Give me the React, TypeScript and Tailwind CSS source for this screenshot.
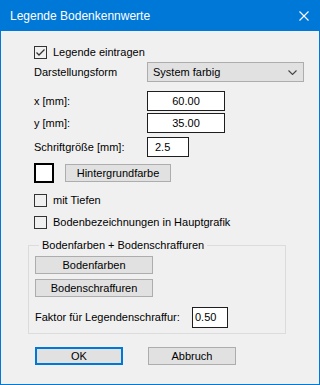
import React from 'react';

const font = { fontFamily: '"Liberation Sans", Arial, sans-serif' };

const CheckBox: React.FC<{ checked?: boolean; label: string }> = ({ checked, label }) => {
  return (
    <div className="flex h-[13px] items-center gap-[6px]">
      <div className="flex h-[13px] w-[13px] items-center justify-center border border-[#333333] bg-[#f0f0f0]">
        {checked && (
          <svg width="11" height="11" viewBox="0 0 11 11">
            <polyline points="1.5,5.5 4,8 9.5,2.5" fill="none" stroke="#333333" strokeWidth="1.3" />
          </svg>
        )}
      </div>
      <span className="text-[11px] leading-[13px] text-black">{label}</span>
    </div>
  );
};

const WinButton: React.FC<{ className?: string; border?: string; children: React.ReactNode }> = ({
  className = '',
  border = 'border border-[#adadad]',
  children,
}) => {
  return (
    <div className={'flex items-center justify-center bg-[#e1e1e1] text-[11px] leading-none text-black ' + border + ' ' + className}>
      {children}
    </div>
  );
};

const Field: React.FC<{ label: string; value: string; className?: string }> = ({ label, value, className = '' }) => {
  return (
    <div className="flex h-[20px] items-center">
      <span className="w-[113px] text-[11px] leading-none text-black">{label}</span>
      <div className={'flex h-[20px] items-center border border-[#1e1e1e] bg-white text-[11px] leading-none text-black ' + className}>
        {value}
      </div>
    </div>
  );
};

const LegendeBodenkennwerte: React.FC = () => {
  return (
    <div className="flex h-[385px] w-[320px] flex-col border border-t-0 border-[#0078d7] bg-[#f0f0f0]" style={font}>
      {/* Titelleiste */}
      <div className="-mx-px flex h-[31px] items-center justify-between bg-[#0078d7] pl-[10px] pr-[11px]">
        <span className="text-[12px] leading-none text-white">Legende Bodenkennwerte</span>
        <svg width="10" height="10" viewBox="0 0 10 10">
          <path d="M0.5 0.5 L9.5 9.5 M9.5 0.5 L0.5 9.5" stroke="#ffffff" strokeWidth="1.1" />
        </svg>
      </div>

      <div className="flex flex-col pl-[33px]">
        <div className="mt-[15px]">
          <CheckBox checked label="Legende eintragen" />
        </div>

        <div className="mt-[3px] flex h-[20px] items-center">
          <span className="w-[113px] text-[11px] leading-none text-black">Darstellungsform</span>
          <div className="flex h-[20px] w-[157px] items-center justify-between border border-[#adadad] bg-[#e1e1e1] pl-[5px] pr-[6px] text-[11px] leading-none text-black">
            <span>System farbig</span>
            <svg width="9" height="5" viewBox="0 0 9 5">
              <polyline points="0.5,0.5 4.5,4.5 8.5,0.5" fill="none" stroke="#444444" strokeWidth="1.1" />
            </svg>
          </div>
        </div>

        <div className="mt-[9px]">
          <Field label="x [mm]:" value="60.00" className="w-[78px] justify-center" />
        </div>
        <div className="mt-[2px]">
          <Field label="y [mm]:" value="35.00" className="w-[78px] justify-center" />
        </div>
        <div className="mt-[4px]">
          <Field label="Schriftgröße [mm]:" value="2.5" className="w-[42px] pl-[7px]" />
        </div>

        <div className="mt-[6px] flex h-[20px] items-center gap-[11px]">
          <div className="h-[20px] w-[20px] border-2 border-black bg-white" />
          <WinButton className="h-[18px] w-[106px]">Hintergrundfarbe</WinButton>
        </div>

        <div className="mt-[11px]">
          <CheckBox label="mit Tiefen" />
        </div>
        <div className="mt-[9px]">
          <CheckBox label="Bodenbezeichnungen in Hauptgrafik" />
        </div>

        {/* Gruppe */}
        <div className="relative ml-[-6px] mt-[16px] flex h-[89px] w-[258px] flex-col border border-[#dcdcdc] pl-[6px]">
          <span className="absolute left-[10px] top-[-7px] bg-[#f0f0f0] px-[3px] text-[11px] leading-[13px] text-black">
            Bodenfarben + Bodenschraffuren
          </span>
          <WinButton className="mt-[10px] h-[18px] w-[118px]">Bodenfarben</WinButton>
          <WinButton className="mt-[5px] h-[18px] w-[118px]">Bodenschraffuren</WinButton>
          <div className="mt-[10px] flex h-[21px] items-center">
            <span className="w-[157px] text-[11px] leading-none text-black">Faktor für Legendenschraffur:</span>
            <div className="flex h-[21px] w-[36px] items-center border border-[#1e1e1e] bg-white pl-[2px] text-[11px] leading-none text-black">
              0.50
            </div>
          </div>
        </div>

        <div className="mt-[13px] flex gap-[25px] pl-px">
          <WinButton className="h-[18px] w-[88px]" border="border-2 border-[#0078d7]">
            OK
          </WinButton>
          <WinButton className="h-[18px] w-[88px]">Abbruch</WinButton>
        </div>
      </div>
    </div>
  );
};

export default function App() {
  return <LegendeBodenkennwerte />;
}
